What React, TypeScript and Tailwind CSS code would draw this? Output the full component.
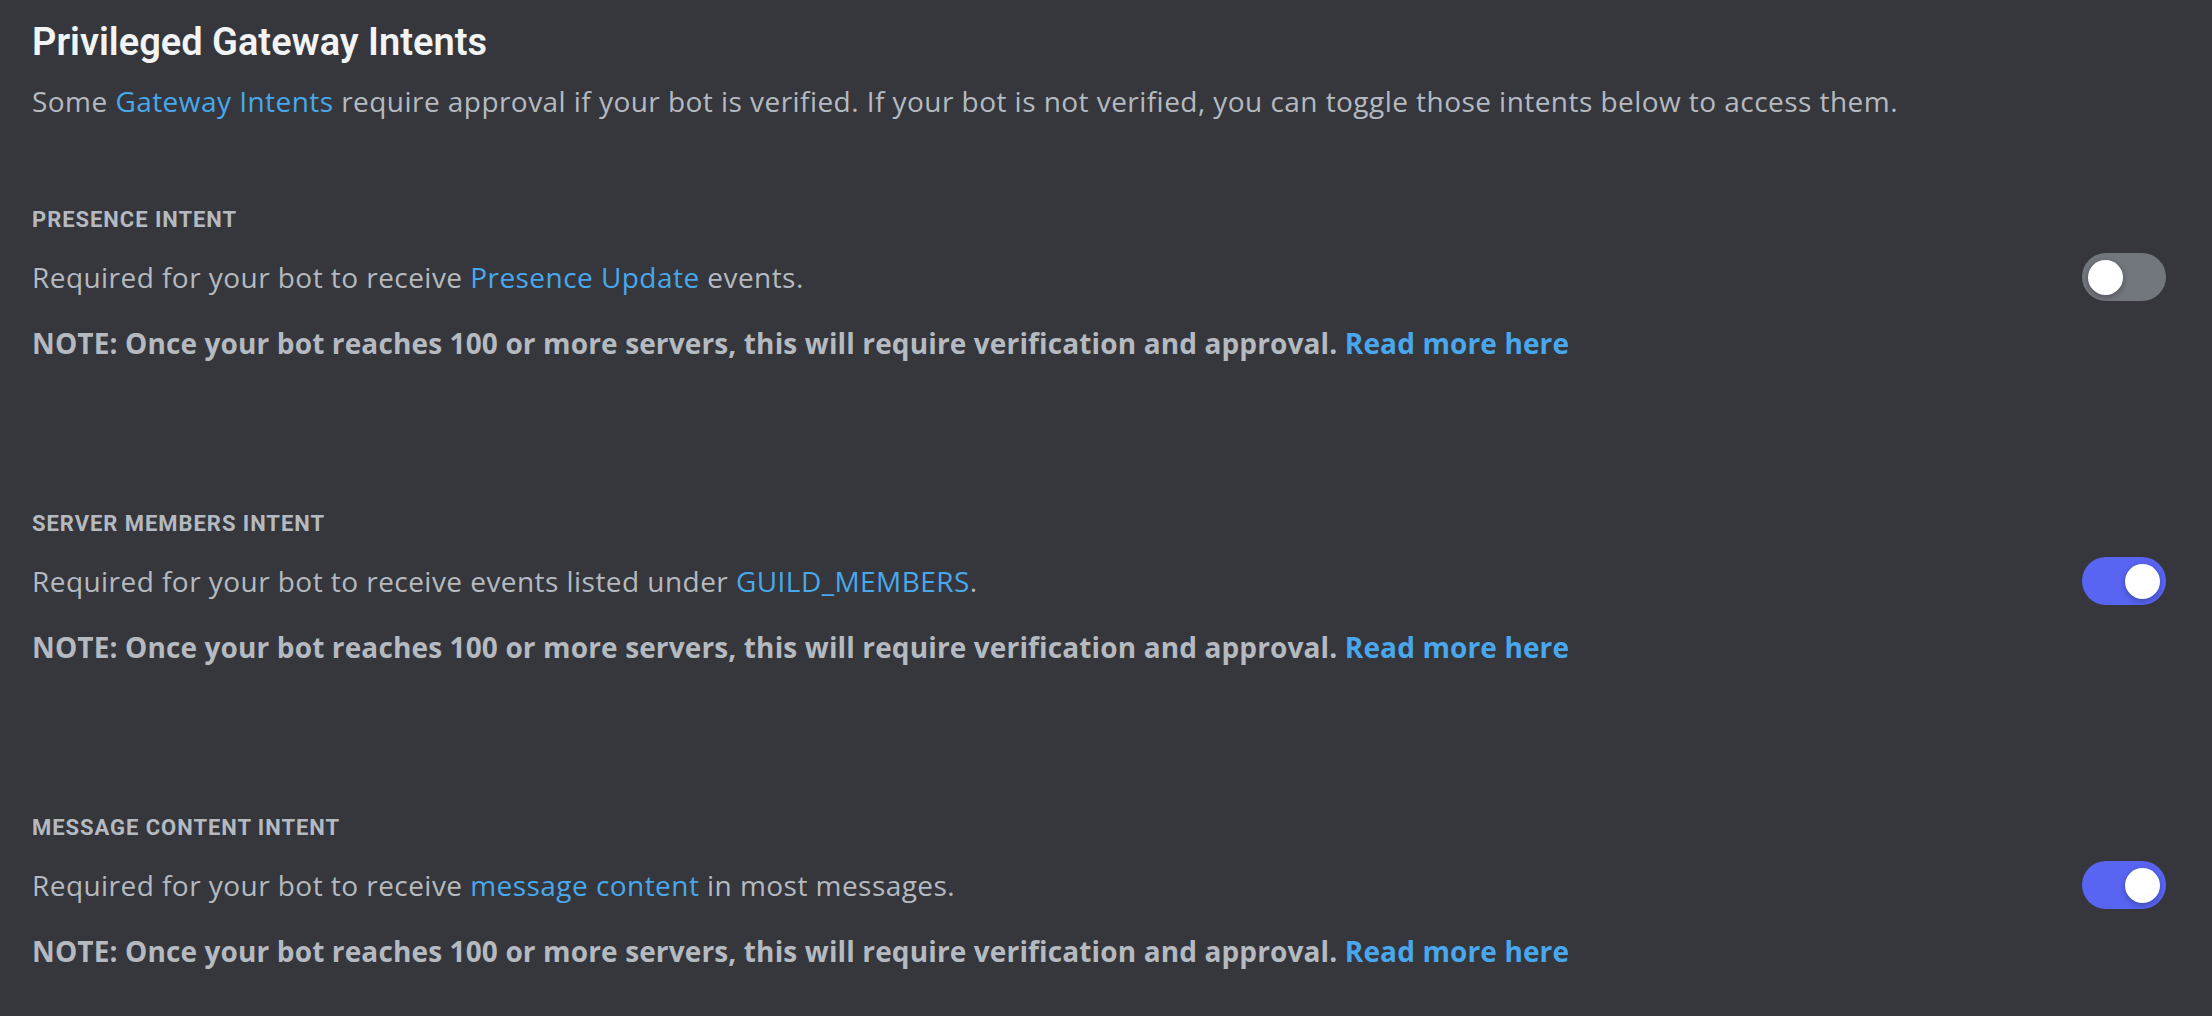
import React, { useState } from "react";

type Intent = {
    title: string;
    before: string;
    link: string;
    after: string;
    enabled: boolean;
};

const intents: Intent[] = [
    {
        title: "PRESENCE INTENT",
        before: "Required for your bot to receive ",
        link: "Presence Update",
        after: " events.",
        enabled: false,
    },
    {
        title: "SERVER MEMBERS INTENT",
        before: "Required for your bot to receive events listed under ",
        link: "GUILD_MEMBERS",
        after: ".",
        enabled: true,
    },
    {
        title: "MESSAGE CONTENT INTENT",
        before: "Required for your bot to receive ",
        link: "message content",
        after: " in most messages.",
        enabled: true,
    },
];

function Toggle({ on, onChange }: { on: boolean; onChange: () => void }) {
    return (
        <button
            type="button"
            onClick={onChange}
            className={`relative h-[48px] w-[84px] shrink-0 rounded-full transition-colors ${
                on ? "bg-[#5865f2]" : "bg-[#72767d]"
            }`}
        >
            <span
                className={`absolute top-[6.5px] h-[35px] w-[35px] rounded-full bg-white shadow-[0_2px_6px_rgba(0,0,0,0.3)] transition-all ${
                    on ? "left-[43px]" : "left-[6px]"
                }`}
            />
        </button>
    );
}

function IntentSection({ intent }: { intent: Intent }) {
    const [on, setOn] = useState(intent.enabled);

    return (
        <div>
            <h3 className="text-[22px] leading-[28px] font-bold tracking-[0.95px] text-[#b5bac1]">{intent.title}</h3>
            <div className="mt-[19px] flex h-[48px] items-center justify-between">
                <p className="font-['Open_Sans',sans-serif] text-[28px] leading-[40px] tracking-[0.45px] text-[#b5bac1]">
                    {intent.before}
                    <a className="text-[#49a8ec]">{intent.link}</a>
                    {intent.after}
                </p>
                <Toggle on={on} onChange={() => setOn(!on)} />
            </div>
            <p className="mt-[22px] font-['Open_Sans',sans-serif] text-[28px] leading-[40px] font-bold tracking-[0.13px] text-[#b5bac1]">
                NOTE: Once your bot reaches 100 or more servers, this will require verification and approval.{" "}
                <a className="text-[#49a8ec]">Read more here</a>
            </p>
        </div>
    );
}

export default function App() {
    return (
        <div className="min-h-screen w-full bg-[#35373c] pl-[32px] pr-[46px] pt-[18px] font-['Roboto',sans-serif]">
            <h2 className="text-[38px] leading-[48px] font-semibold text-[#f2f3f5]">
                Privileged Gateway Intents
            </h2>
            <p className="mt-[15px] font-['Open_Sans',sans-serif] text-[28px] leading-[40px] tracking-[0.45px] text-[#b5bac1]">
                Some <a className="text-[#49a8ec]">Gateway Intents</a> require approval if your bot is verified. If
                your bot is not verified, you can toggle those intents below to access them.
            </p>

            <div className="mt-[85px] flex flex-col gap-[147px]">
                {intents.map((intent) => (
                    <IntentSection key={intent.title} intent={intent} />
                ))}
            </div>
        </div>
    );
}
